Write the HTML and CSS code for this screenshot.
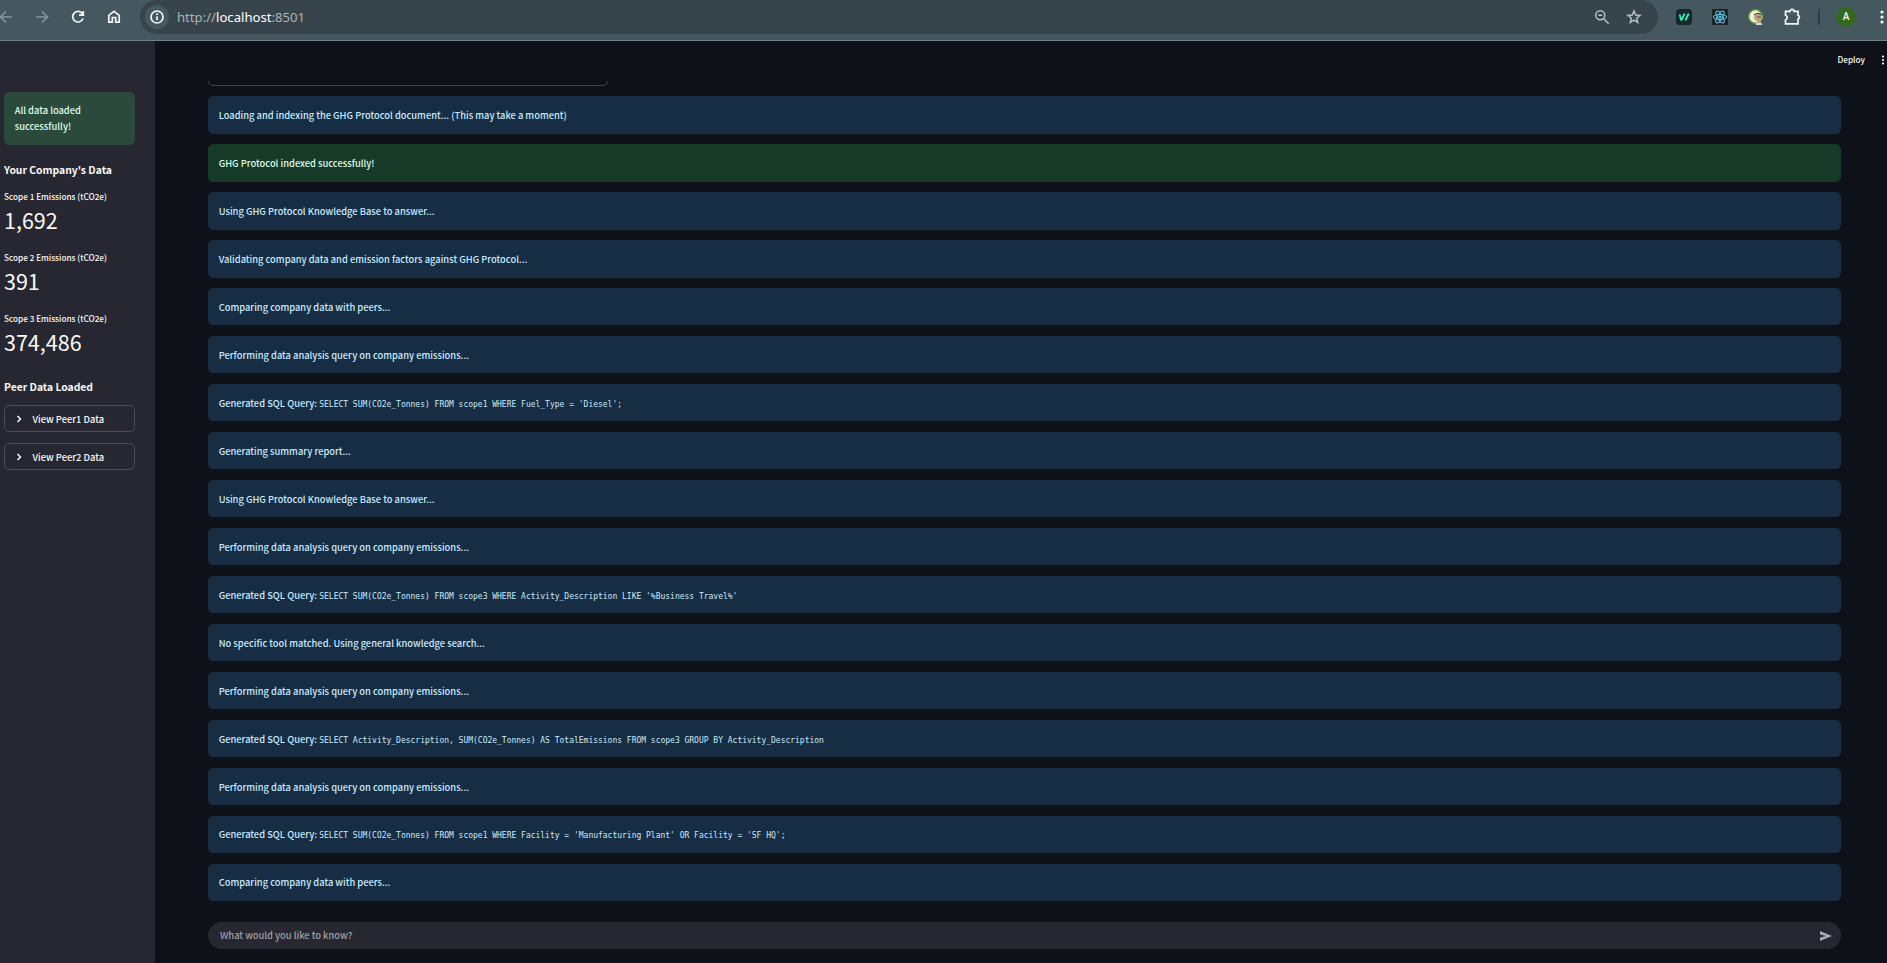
FILE: index.html
```html
<!DOCTYPE html>
<html lang="en">
<head>
<meta charset="utf-8">
<title>localhost:8501</title>
<link rel="stylesheet" href="styles.css">
</head>
<body>
<header class="browser">
  <nav class="nav">
    <svg class="ico dim" viewBox="0 0 24 24"><path d="M18 12H7M12 6.500L6.500 12l5.500 5.500"/></svg>
    <svg class="ico dim" viewBox="0 0 24 24"><path d="M6 12h11M12 6.500l5.500 5.500-5.500 5.500"/></svg>
    <svg class="ico bright" viewBox="0 0 24 24"><path d="M16.600 9A5.300 5.300 0 1 0 17 13.500M17.300 6v4.200h-4.200"/></svg>
    <svg class="ico bright" viewBox="0 0 24 24"><path d="M6.800 17.200V10.300L12 6.300l5.200 4v6.900h-3.500v-4.700h-3.400v4.700z"/></svg>
  </nav>
  <div class="omnibox">
    <span class="info"><svg class="ico bright" viewBox="0 0 24 24"><circle cx="12" cy="12" r="6"/><path d="M12 11.300v4M12 8.300v1.700"/></svg></span>
    <span class="url">http://<b>localhost</b>:8501</span>
    <svg class="ico gray" viewBox="0 0 24 24"><circle cx="10.300" cy="10.300" r="4.500"/><path d="M13.700 13.700l5 5M8.300 10.300h4"/></svg>
    <svg class="ico gray" viewBox="0 0 24 24"><path d="M12 6l1.700 4 4.300.4-3.300 2.800 1 4.300L12 15.200l-3.700 2.300 1-4.300L6 10.400l4.300-.4z"/></svg>
  </div>
  <div class="exts">
    <svg class="ext" viewBox="0 0 24 24"><rect x="4" y="4" width="16" height="16" rx="3.500" fill="#18272c"/><path d="M7.600 9.500l1.600 6M9.300 15.500l3.400-7M13.300 15.500l3.400-7" fill="none" stroke="#2ff0b5" stroke-width="1.800"/></svg>
    <svg class="ext" viewBox="0 0 24 24"><rect x="4" y="4" width="16" height="16" fill="#202225"/><g fill="none" stroke="#58c4e4" stroke-width="1"><ellipse cx="12" cy="12" rx="6.700" ry="2.600"/><ellipse cx="12" cy="12" rx="6.700" ry="2.600" transform="rotate(60 12 12)"/><ellipse cx="12" cy="12" rx="6.700" ry="2.600" transform="rotate(120 12 12)"/></g><circle cx="12" cy="12" r="1.500" fill="#58c4e4"/></svg>
    <svg class="ext" viewBox="0 0 24 24"><circle cx="11.500" cy="11.500" r="6.800" fill="#e9efdc" stroke="#5b9b29" stroke-width="1.300"/><path d="M10 9.500l5-2 3.500 2v4l-2 3.500 2 3h-7l2-3.500-3-2z" fill="#bba181"/><path d="M10 9.700l4-1.500 4 1.500M13 12h4" stroke="#65402f" fill="none"/><path d="M12 18h6v2h-6z" fill="#d5d8cf"/></svg>
    <svg class="ico bright" viewBox="0 0 24 24"><path d="M5.500 6.300h4.500a2 1.900 0 0 1 4 0h4v4a2 2 0 0 1 0 3.800v4.700H5.500v-4a2.400 2.400 0 0 0 0-4.600z"/></svg>
  </div>
  <span class="divider"></span>
  <span class="avatar">A</span>
  <svg class="more" viewBox="0 0 10 16"><circle cx="5" cy="3" r="1.600"/><circle cx="5" cy="8" r="1.600"/><circle cx="5" cy="13" r="1.600"/></svg>
</header>
<div class="app">
  <aside class="sidebar">
    <div class="alert success side">All data loaded<br>successfully!</div>
    <h3 class="heading">Your Company's Data</h3>
    <div class="metric"><span class="label">Scope 1 Emissions (tCO2e)</span><span class="value">1,692</span></div>
    <div class="metric"><span class="label">Scope 2 Emissions (tCO2e)</span><span class="value">391</span></div>
    <div class="metric"><span class="label">Scope 3 Emissions (tCO2e)</span><span class="value">374,486</span></div>
    <h3 class="heading peer">Peer Data Loaded</h3>
    <div class="expander"><svg class="chev" viewBox="0 0 8 8"><path d="M2.500 1l3 3-3 3"/></svg><span>View Peer1 Data</span></div>
    <div class="expander"><svg class="chev" viewBox="0 0 8 8"><path d="M2.500 1l3 3-3 3"/></svg><span>View Peer2 Data</span></div>
  </aside>
  <main class="main">
    <div class="topbar"><span class="deploy">Deploy</span><svg class="kebab" viewBox="0 0 6 10"><circle cx="3" cy="1.500" r="1.100"/><circle cx="3" cy="5" r="1.100"/><circle cx="3" cy="8.500" r="1.100"/></svg></div>
    <div class="content">
      <div class="cutoff"></div>
      <div class="messages">
        <div class="alert"><span>Loading and indexing the GHG Protocol document... (This may take a moment)</span></div>
        <div class="alert success"><span>GHG Protocol indexed successfully!</span></div>
        <div class="alert"><span>Using GHG Protocol Knowledge Base to answer...</span></div>
        <div class="alert"><span>Validating company data and emission factors against GHG Protocol...</span></div>
        <div class="alert"><span>Comparing company data with peers...</span></div>
        <div class="alert"><span>Performing data analysis query on company emissions...</span></div>
        <div class="alert"><span>Generated SQL Query: </span><code>SELECT SUM(CO2e_Tonnes) FROM scope1 WHERE Fuel_Type = 'Diesel';</code></div>
        <div class="alert"><span>Generating summary report...</span></div>
        <div class="alert"><span>Using GHG Protocol Knowledge Base to answer...</span></div>
        <div class="alert"><span>Performing data analysis query on company emissions...</span></div>
        <div class="alert"><span>Generated SQL Query: </span><code>SELECT SUM(CO2e_Tonnes) FROM scope3 WHERE Activity_Description LIKE '%Business Travel%'</code></div>
        <div class="alert"><span>No specific tool matched. Using general knowledge search...</span></div>
        <div class="alert"><span>Performing data analysis query on company emissions...</span></div>
        <div class="alert"><span>Generated SQL Query: </span><code>SELECT Activity_Description, SUM(CO2e_Tonnes) AS TotalEmissions FROM scope3 GROUP BY Activity_Description</code></div>
        <div class="alert"><span>Performing data analysis query on company emissions...</span></div>
        <div class="alert"><span>Generated SQL Query: </span><code>SELECT SUM(CO2e_Tonnes) FROM scope1 WHERE Facility = 'Manufacturing Plant' OR Facility = 'SF HQ';</code></div>
        <div class="alert"><span>Comparing company data with peers...</span></div>
      </div>
      <div class="chat"><span class="placeholder">What would you like to know?</span><svg class="send" viewBox="0 0 12 10"><path d="M0 0l12 5-12 5V6.500L6 5 0 3.500z"/></svg></div>
    </div>
  </main>
</div>
</body>
</html>
```
FILE: styles.css
```css
* { box-sizing: border-box; }
body {
  margin: 0;
  height: 963px;
  overflow: hidden;
  display: flex;
  flex-direction: column;
  background: #0e1117;
  color: #fafafa;
  font-family: "Noto Sans CJK SC", "Noto Sans", sans-serif;
  font-size: 9.33px;
  font-weight: 500;
  line-height: 16px;
}

/* Browser toolbar */
.browser {
  height: 41px;
  flex: none;
  display: flex;
  align-items: flex-start;
  background: #455860;
  border-bottom: 1px solid #737f84;
}
.nav, .exts { display: flex; gap: 12px; height: 34px; align-items: center; }
.nav { margin-left: -6px; }
.exts { margin-left: 14px; }
.ico { width: 24px; height: 24px; flex: none; fill: none; stroke-width: 1.7; }
.ext { width: 24px; height: 24px; flex: none; }
.dim { stroke: #86939a; }
.bright { stroke: #f4f5f5; }
.gray { stroke: #b9bec1; stroke-width: 1.5; }
.omnibox {
  margin-left: 14px;
  width: 1518px;
  height: 34px;
  border-radius: 17px;
  background: #38444b;
  display: flex;
  align-items: center;
  gap: 8px;
  padding: 0 12px 0 5px;
}
.info { width: 24px; height: 24px; border-radius: 50%; background: #455860; display: flex; }
.url {
  flex: 1;
  font: 400 13.15px/20px "Noto Sans", sans-serif;
  color: #adb3b6;
}
.url b { font-weight: 400; color: #fff; }
.divider { width: 2px; height: 16px; margin: 9px 16px 0 14px; background: #2f3d43; }
.avatar {
  width: 20px;
  height: 20px;
  margin-top: 7px;
  border-radius: 50%;
  background: #33691e;
  font: 500 10px/20px Roboto, sans-serif;
  text-align: center;
}
.more { width: 10px; height: 16px; margin: 9px 0 0 21px; flex: none; fill: #f4f5f5; }

.app { flex: 1; display: flex; min-height: 0; }

/* Sidebar */
.sidebar {
  width: 155px;
  flex: none;
  padding: 51px 20px 0 4px;
  background: #262730;
}
.alert {
  height: 37.3125px;
  padding: 10.67px;
  border-radius: 5.33px;
  background: #172d43;
  color: #c7ebff;
  white-space: pre;
}
.success { background: #173928; color: #dffde9; }
.side { height: 53px; background: #2b4a3c; padding-top: 10px; }
.heading { margin: 16px 0 0; font-size: 10.35px; font-weight: 700; line-height: 18px; white-space: nowrap; }
.metric { display: flex; flex-direction: column; height: 61px; padding-top: 10px; white-space: nowrap; }
.label { font-size: 8.2px; line-height: 14px; }
.value { font-size: 21.5px; font-weight: 400; line-height: 33px; }
.heading.peer { margin-top: 16px; }
.expander {
  display: flex;
  align-items: center;
  gap: 9.5px;
  height: 27px;
  margin-top: 11px;
  padding-left: 10px;
  border: 1px solid #4b4c54;
  border-radius: 5.33px;
}
.heading + .expander { margin-top: 9px; }
.chev { width: 8px; height: 8px; fill: none; stroke: #fafafa; stroke-width: 1.5; }

/* Main area */
.main { flex: 1; display: flex; flex-direction: column; min-width: 0; }
.topbar {
  height: 40px;
  flex: none;
  display: flex;
  justify-content: flex-end;
  align-items: flex-start;
  padding: 10px 1px 0 0;
  font-size: 8.2px;
}
.kebab { width: 6px; height: 10px; margin: 4px 0 0 15px; fill: #fafafa; }
.content { padding: 0 46px 0 53px; }
.cutoff {
  width: 400px;
  height: 5px;
  border: 1px solid #41444c;
  border-top: 0;
  border-radius: 0 0 5px 5px;
}
.messages { display: flex; flex-direction: column; gap: 10.65625px; padding-top: 10.29px; }
code { font: 400 8px/16px "DejaVu Sans Mono", monospace; letter-spacing: -0.01px; }
.chat {
  height: 27px;
  margin-top: 21px;
  padding: 0 9px 0 12px;
  border-radius: 13.5px;
  background: #262730;
  color: #a0a0a5;
  display: flex;
  justify-content: space-between;
  align-items: center;
}
.placeholder { padding-bottom: 2px; }
.send { width: 12px; height: 10px; fill: #a3a8b8; }
```
